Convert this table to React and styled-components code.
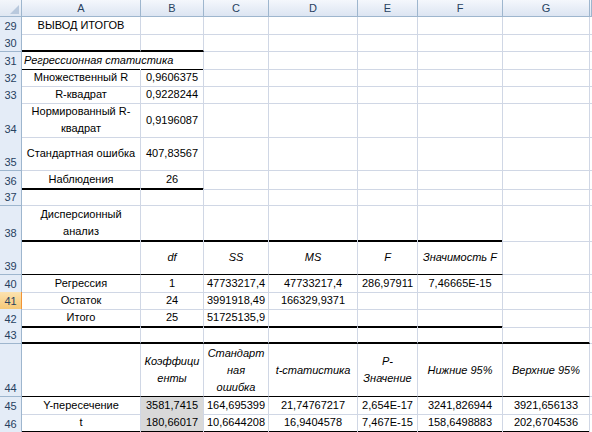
import React from "react";
import styled, { createGlobalStyle } from "styled-components";

const GlobalStyle = createGlobalStyle`
  body {
    margin: 0;
    background: #fff;
    overflow: hidden;
    font-family: "Liberation Sans", Arial, sans-serif;
  }
`;

const COLS = "22px 119px 63px 65px 89px 60px 85px 87px 1fr";
const LETTERS = ["A", "B", "C", "D", "E", "F", "G", ""];

const Sheet = styled.div`
  width: 592px;
  height: 432px;
  overflow: hidden;
  display: flex;
  flex-direction: column;
  font-size: 11px;
  color: #000;
`;

const Row = styled.div`
  display: grid;
  grid-template-columns: ${COLS};
  height: ${({ $h }) => $h}px;
  flex-shrink: 0;
`;

const Corner = styled.div`
  position: relative;
  background: linear-gradient(#f3f6fb, #dfe7f2);
  border-right: 1px solid #9eb6ce;
  border-bottom: 1px solid #9eb6ce;
  &::after {
    content: "";
    position: absolute;
    right: 2px;
    bottom: 2px;
    border-left: 9px solid transparent;
    border-bottom: 9px solid #b9c9dd;
  }
`;

const ColHead = styled.div`
  display: flex;
  align-items: center;
  justify-content: center;
  background: linear-gradient(#f4f7fc, #dce5f2);
  border-right: 1px solid #9eb6ce;
  border-bottom: 1px solid #9eb6ce;
  color: #27415f;
  font-size: 11px;
`;

const RowHead = styled.div`
  display: flex;
  align-items: flex-end;
  justify-content: center;
  padding-bottom: 1px;
  background: ${({ $active }) =>
    $active ? "linear-gradient(#fbe2b0, #f6c978)" : "#e4ecf7"};
  border-right: 1px solid ${({ $active }) => ($active ? "#f29436" : "#9eb6ce")};
  border-bottom: 1px solid ${({ $active }) => ($active ? "#f29436" : "#9eb6ce")};
  color: #27415f;
  font-size: 11px;
  line-height: 13px;
`;

const bottoms = {
  grid: "1px solid #d0d7e5",
  thin: "1px solid #000",
  thick: "2px solid #000",
};

const Cell = styled.div`
  display: flex;
  align-items: center;
  justify-content: ${({ $left }) => ($left ? "flex-start" : "center")};
  min-width: 0;
  padding: 0 2px;
  border-right: 1px solid
    ${({ $spill }) => ($spill ? "transparent" : "#d0d7e5")};
  border-bottom: ${({ $bottom }) => bottoms[$bottom || "grid"]};
  background: ${({ $selected }) => ($selected ? "#d9d9d9" : "transparent")};
  font-style: ${({ $italic }) => ($italic ? "italic" : "normal")};
  white-space: ${({ $spill }) => ($spill ? "pre" : "pre-line")};
  text-align: center;
  line-height: 17px;
  overflow: visible;
`;

const span = (from, to, kind) => {
  const out = {};
  for (let i = from; i <= to; i++) out[i] = kind;
  return out;
};

const rows = [
  { n: 29, h: 17, cells: { 0: "ВЫВОД ИТОГОВ" } },
  { n: 30, h: 18, bottom: span(0, 1, "thick") },
  {
    n: 31,
    h: 17,
    cells: { 0: { t: "Регрессионная статистика", italic: true, left: true, spill: true } },
    bottom: span(0, 1, "thin"),
  },
  { n: 32, h: 17, cells: { 0: "Множественный R", 1: "0,9606375" } },
  { n: 33, h: 17, cells: { 0: "R-квадрат", 1: "0,9228244" } },
  { n: 34, h: 34, cells: { 0: "Нормированный R-\nквадрат", 1: "0,9196087" } },
  { n: 35, h: 34, cells: { 0: "Стандартная ошибка", 1: "407,83567" } },
  { n: 36, h: 18, cells: { 0: "Наблюдения", 1: "26" }, bottom: span(0, 1, "thick") },
  { n: 37, h: 17 },
  { n: 38, h: 34, cells: { 0: "Дисперсионный\nанализ" }, bottom: span(0, 5, "thick") },
  {
    n: 39,
    h: 35,
    italic: true,
    cells: { 1: "df", 2: "SS", 3: "MS", 4: "F", 5: "Значимость F" },
    bottom: span(0, 5, "thin"),
  },
  {
    n: 40,
    h: 17,
    cells: {
      0: "Регрессия",
      1: "1",
      2: "47733217,4",
      3: "47733217,4",
      4: "286,97911",
      5: "7,46665E-15",
    },
  },
  {
    n: 41,
    h: 17,
    active: true,
    cells: { 0: "Остаток", 1: "24", 2: "3991918,49", 3: "166329,9371" },
  },
  {
    n: 42,
    h: 18,
    cells: { 0: "Итого", 1: "25", 2: "51725135,9" },
    bottom: span(0, 5, "thick"),
  },
  { n: 43, h: 17, bottom: span(0, 6, "thick") },
  {
    n: 44,
    h: 53,
    italic: true,
    cells: {
      1: "Коэффици\nенты",
      2: "Стандарт\nная\nошибка",
      3: "t-статистика",
      4: "P-\nЗначение",
      5: "Нижние 95%",
      6: "Верхние 95%",
    },
    bottom: span(0, 6, "thin"),
  },
  {
    n: 45,
    h: 17,
    cells: {
      0: "Y-пересечение",
      1: { t: "3581,7415", selected: true },
      2: "164,695399",
      3: "21,74767217",
      4: "2,654E-17",
      5: "3241,826944",
      6: "3921,656133",
    },
  },
  {
    n: 46,
    h: 17,
    cells: {
      0: "t",
      1: { t: "180,66017", selected: true },
      2: "10,6644208",
      3: "16,9404578",
      4: "7,467E-15",
      5: "158,6498883",
      6: "202,6704536",
    },
    bottom: span(0, 6, "thick"),
  },
  // only a sliver of the next row shows at the bottom edge
  { n: 47, h: 17, hideNumber: true },
];

const App = () => (
  <>
    <GlobalStyle />
    <Sheet>
      <Row $h={17}>
        <Corner />
        {LETTERS.map((l, i) => (
          <ColHead key={i}>{l}</ColHead>
        ))}
      </Row>
      {rows.map((row) => (
        <Row $h={row.h} key={row.n}>
          <RowHead $active={row.active}>{row.hideNumber ? "" : row.n}</RowHead>
          {LETTERS.map((_, i) => {
            const raw = row.cells && row.cells[i];
            const cell = typeof raw === "string" ? { t: raw } : raw || {};
            return (
              <Cell
                key={i}
                $bottom={row.bottom && row.bottom[i]}
                $italic={cell.italic || (row.italic && cell.t)}
                $left={cell.left}
                $spill={cell.spill}
                $selected={cell.selected}
              >
                {cell.t}
              </Cell>
            );
          })}
        </Row>
      ))}
    </Sheet>
  </>
);

export default App;
